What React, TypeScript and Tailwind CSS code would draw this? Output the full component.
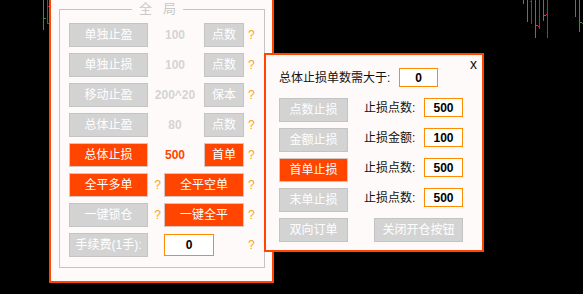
import React from "react";

function Btn({ active, className, children }: { active?: boolean; className?: string; children: React.ReactNode }) {
  return (
    <div
      className={`flex items-center justify-center h-[24px] border text-[12px] text-white whitespace-nowrap ${
        active ? "bg-[#ff4500] border-[#d6c6be]" : "bg-[#d3d3d3] border-[#c4c4c4]"
      } ${className ?? ""}`}
    >
      {children}
    </div>
  );
}

function Q({ className }: { className?: string }) {
  return <span className={`text-[12px] leading-none text-[#f5a623] ${className ?? ""}`}>?</span>;
}

function Box({ className, children }: { className?: string; children: React.ReactNode }) {
  return (
    <div
      className={`flex items-center justify-center border border-[#ff8c00] bg-white text-[12px] font-bold text-black ${className ?? ""}`}
    >
      {children}
    </div>
  );
}

function Chart() {
  const lines: [number, number, string][] = [
    [43, 30, "g"],
    [47, 24, "r"],
    [523, 4, "g"],
    [527, 22, "g"],
    [531, 24, "r"],
    [535, 38, "g"],
    [539, 29, "r"],
    [543, 21, "g"],
    [547, 38, "r"],
    [575, 17, "g"],
    [579, 32, "g"],
  ];
  const ticks: [number, number, string][] = [
    [44, 18, "g"],
    [48, 6, "r"],
    [48, 23, "r"],
    [530, 1, "r"],
    [536, 25, "g"],
    [538, 26, "r"],
    [544, 15, "g"],
    [546, 14, "r"],
    [580, 22, "g"],
    [582, 23, "r"],
  ];
  const col = (c: string) => (c === "g" ? "#2f9a28" : "#dc143c");
  return (
    <svg className="absolute left-0 top-0" width={583} height={294}>
      {lines.map(([x, h, c], i) => (
        <line key={i} x1={x + 0.5} x2={x + 0.5} y1={0} y2={h} stroke={col(c)} strokeWidth={1} />
      ))}
      {ticks.map(([x, y, c], i) => (
        <rect key={"t" + i} x={x} y={y} width={2} height={1} fill={col(c)} />
      ))}
    </svg>
  );
}

export default function App() {
  const topRows = [
    { a: "单独止盈", v: "100", b: "点数", act: false },
    { a: "单独止损", v: "100", b: "点数", act: false },
    { a: "移动止盈", v: "200^20", b: "保本", act: false },
    { a: "总体止盈", v: "80", b: "点数", act: false },
    { a: "总体止损", v: "500", b: "首单", act: true },
  ];
  const rightRows = [
    { a: "点数止损", l: "止损点数:", v: "500", act: false },
    { a: "金额止损", l: "止损金额:", v: "100", act: false },
    { a: "首单止损", l: "止损点数:", v: "500", act: true },
    { a: "末单止损", l: "止损点数:", v: "500", act: false },
  ];
  return (
    <div className="relative w-[583px] h-[294px] overflow-hidden bg-black font-['Liberation_Sans','Noto_Sans_CJK_SC',sans-serif]">
      <Chart />

      {/* Left window */}
      <div className="absolute left-[49px] top-[-2px] w-[225px] h-[285px] border-2 border-[#ff4500] bg-[#fffafa]">
        <fieldset className="ml-[8px] w-[206px] border border-[#c4c4c4] pl-[9px] pb-[10px]">
          <legend className="ml-[63px] px-[7px] h-[18px] flex items-center gap-[11px] text-[13px] text-[#c8c8c8]">
            <span>全</span>
            <span>局</span>
          </legend>
          <div className="mt-[5px] flex flex-col gap-[6px]">
            {topRows.map((r) => (
              <div key={r.a} className="flex items-center h-[24px]">
                <Btn className="w-[79px]" active={r.act}>
                  {r.a}
                </Btn>
                <div
                  className={`w-[56px] pr-[2px] text-center text-[12px] font-bold ${
                    r.act ? "text-[#ff4500]" : "text-[#d4d4d4]"
                  }`}
                >
                  {r.v}
                </div>
                <Btn className="w-[40px]" active={r.act}>
                  {r.b}
                </Btn>
                <Q className="ml-[4px]" />
              </div>
            ))}
            <div className="flex items-center h-[24px]">
              <Btn className="w-[79px]" active>
                全平多单
              </Btn>
              <div className="w-[16px] flex justify-center pl-[3px]">
                <Q />
              </div>
              <Btn className="w-[80px]" active>
                全平空单
              </Btn>
              <Q className="ml-[4px]" />
            </div>
            <div className="flex items-center h-[24px]">
              <Btn className="w-[79px]">一键锁仓</Btn>
              <div className="w-[16px] flex justify-center pl-[3px]">
                <Q />
              </div>
              <Btn className="w-[80px]" active>
                一键全平
              </Btn>
              <Q className="ml-[4px]" />
            </div>
            <div className="flex items-center h-[24px]">
              <Btn className="w-[79px]">手续费(1手):</Btn>
              <div className="w-[16px]" />
              <Box className="w-[50px] h-[22px]">0</Box>
              <Q className="ml-[34px]" />
            </div>
          </div>
        </fieldset>
      </div>

      {/* Right window */}
      <div className="absolute left-[264px] top-[53px] w-[220px] h-[199px] border-2 border-[#ff4500] bg-[#fffafa]">
        <span className="absolute right-[5px] top-[0px] text-[14px] leading-[18px] text-[#111]">x</span>
        <div className="pl-[13px] pt-[13px]">
          <div className="flex items-center h-[19px]">
            <span className="w-[120px] text-[12px] text-[#111] whitespace-nowrap">总体止损单数需大于:</span>
            <Box className="w-[39px] h-[19px]">0</Box>
          </div>
          <div className="mt-[11px] flex flex-col gap-[6px]">
            {rightRows.map((r) => (
              <div key={r.a} className="flex items-start h-[24px]">
                <Btn className="w-[69px]" active={r.act}>
                  {r.a}
                </Btn>
                <span className="ml-[16px] w-[60px] h-[20px] flex items-center text-[12px] text-[#111] whitespace-nowrap">
                  {r.l}
                </span>
                <Box className="w-[39px] h-[19px]">{r.v}</Box>
              </div>
            ))}
            <div className="flex items-start h-[24px]">
              <Btn className="w-[69px]">双向订单</Btn>
              <Btn className="ml-[26px] w-[89px]">关闭开仓按钮</Btn>
            </div>
          </div>
        </div>
      </div>
    </div>
  );
}
